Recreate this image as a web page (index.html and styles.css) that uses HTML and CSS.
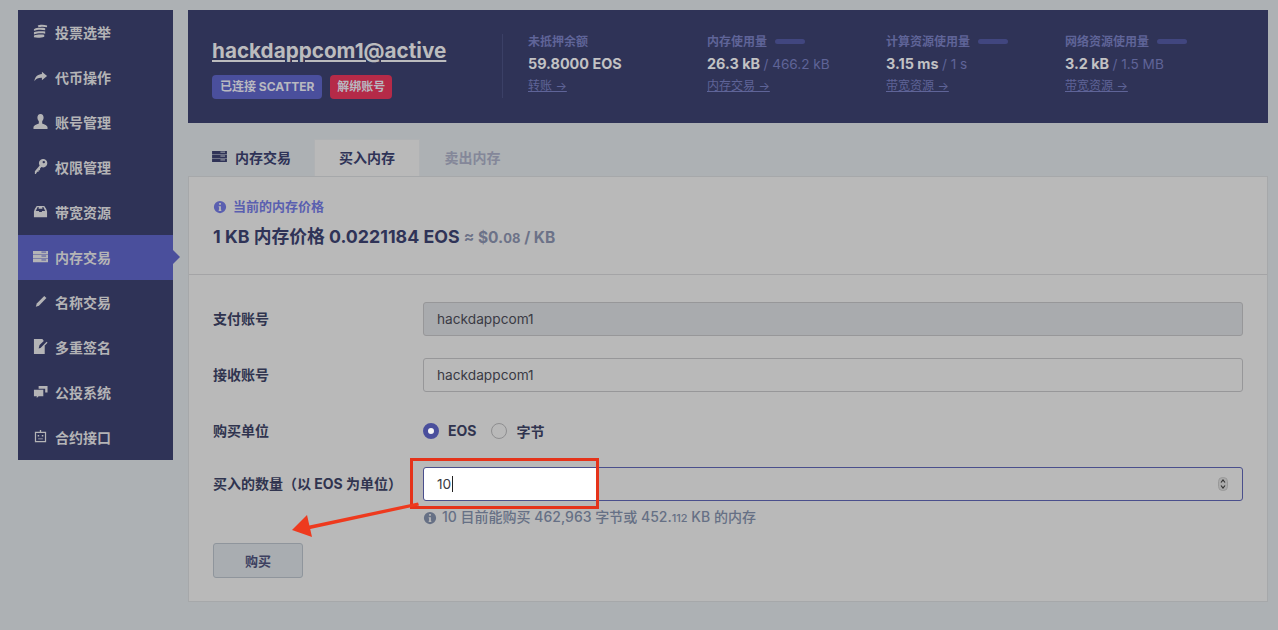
FILE: index.html
```html
<!DOCTYPE html>
<html lang="zh-CN">
  <head>
    <meta charset="UTF-8" />
    <meta name="viewport" content="width=device-width, initial-scale=1.0" />
    <title>内存交易</title>
    <link rel="stylesheet" href="styles.css">
  </head>
  <body>
    <div class="page">
      <ul class="sidebar">
        <li class="nav-item">
          <svg class="nav-icon" viewBox="0 0 16 16"><path d="M5 1.500C7 .5 12 .5 15 1.500v2c-3-1-7-.8-9 0zM1 5.500c2-1.500 8-2 12-1v2.200c-4-1-9-.6-12 .6zM1 8.700c3-1.200 8-1.400 12-.6v2.200c-4-.8-9-.4-12 .8zM1 12.300c3-1.200 8-1.400 11-.8v2c-3 1.200-8 1.400-11 .6z"/></svg>
          投票选举
        </li>
        <li class="nav-item">
          <svg class="nav-icon" viewBox="0 0 16 16"><path d="M9.500 3l5.500 4.500-5.500 4.500V9.400C6 9.200 3.500 10.200 1.500 13 2 8.500 5 5.800 9.500 5.400z"/></svg>
          代币操作
        </li>
        <li class="nav-item">
          <svg class="nav-icon" viewBox="0 0 16 16"><path d="M8 0c2.200 0 3.300 1.600 3.300 3.800 0 1.800-.8 3.300-1.500 4v2.200c1 .8 5 1.200 5.700 4v2H.5v-2c.7-2.800 4.700-3.200 5.700-4V7.800c-.7-.7-1.500-2.200-1.500-4C4.700 1.600 5.800 0 8 0z"/></svg>
          账号管理
        </li>
        <li class="nav-item">
          <svg class="nav-icon" viewBox="0 0 16 16"><path fill-rule="evenodd" d="M10.500 0a4.500 4.500 0 0 1 .5 9c-.8 0-1.500-.2-2-.5L7.500 10v2H6v1.500H4.500L3 16H2v-3l5.100-6A4.500 4.500 0 0 1 10.500 0zm1 2a1.300 1.300 0 1 0 0 2.600 1.300 1.300 0 0 0 0-2.600z"/></svg>
          权限管理
        </li>
        <li class="nav-item">
          <svg class="nav-icon" viewBox="0 0 16 16"><path fill-rule="evenodd" d="M4 2h8l2 3 1 3v6H1V8l1-3zm1 1.300L3 7.500h3.500v1h3v-1H13l-2-4.200h-1V5H6V3.300z"/></svg>
          带宽资源
        </li>
        <li class="nav-item active">
          <svg class="nav-icon" viewBox="0 0 16 14"><path d="M0 1h16v3.600H0zM0 5.200h16v3.600H0zM0 9.400h16V13H0z"/><path d="M9 2.300h5M9 6.500h5M9 10.700h5" stroke="#4a4f9c"/></svg>
          内存交易
        </li>
        <li class="nav-item">
          <svg class="nav-icon" viewBox="0 0 16 16"><path d="M12 2l2.300 2.300-8 8.200-3.300 1 1-3.300z"/></svg>
          名称交易
        </li>
        <li class="nav-item">
          <svg class="nav-icon" viewBox="0 0 16 16"><path d="M1 0h9l1.500 2-4.500 4.500-1 3.500 3.500-1 3-3v10H1zM15.500 4L9 10.500 8 9.500 14.500 3z"/></svg>
          多重签名
        </li>
        <li class="nav-item">
          <svg class="nav-icon" viewBox="0 0 16 16"><path d="M6 2h9.500v7H13V5H6zM1 6h10v7H6l-2 2v-2H1z"/></svg>
          公投系统
        </li>
        <li class="nav-item">
          <svg class="nav-icon" viewBox="0 0 16 16"><path fill-rule="evenodd" d="M7.300 1h1.400v2H14v11H2V3h5.300zM3.300 4.300v8.400h9.400V4.300zM5 6.500h1.600v1.600H5zm4.400 0H11v1.600H9.400zM5.500 10h5v1h-5z"/></svg>
          合约接口
        </li>
      </ul>

      <div class="content">
        <div class="account-bar">
          <div class="account">
            <a class="account-name">hackdappcom1@active</a>
            <div class="badges">
              <span class="badge badge-blue">已连接 SCATTER</span>
              <span class="badge badge-red">解绑账号</span>
            </div>
          </div>
          <div class="stats">
            <div class="stat">
              <div class="stat-label">未抵押余额</div>
              <div class="stat-value">59.8000 EOS</div>
              <a class="stat-link">转账 →</a>
            </div>
            <div class="stat">
              <div class="stat-label">内存使用量 <span class="meter"></span></div>
              <div class="stat-value">26.3 kB <span class="stat-total">/ 466.2 kB</span></div>
              <a class="stat-link">内存交易 →</a>
            </div>
            <div class="stat">
              <div class="stat-label">计算资源使用量 <span class="meter"></span></div>
              <div class="stat-value">3.15 ms <span class="stat-total">/ 1 s</span></div>
              <a class="stat-link">带宽资源 →</a>
            </div>
            <div class="stat">
              <div class="stat-label">网络资源使用量 <span class="meter"></span></div>
              <div class="stat-value">3.2 kB <span class="stat-total">/ 1.5 MB</span></div>
              <a class="stat-link">带宽资源 →</a>
            </div>
          </div>
        </div>

        <div class="tabs">
          <div class="tab tab-plain">
            <svg class="tab-icon" viewBox="0 0 16 14"><path d="M0 1h16v3.600H0zM0 5.200h16v3.600H0zM0 9.400h16V13H0z"/><path d="M9 2.300h5M9 6.500h5M9 10.700h5" stroke="#adb1b4"/></svg>
            内存交易
          </div>
          <div class="tab tab-active">买入内存</div>
          <div class="tab tab-muted">卖出内存</div>
        </div>

        <div class="card">
          <div class="price">
            <div class="price-title">
              <svg class="info-icon" viewBox="0 0 16 16"><path fill-rule="evenodd" d="M8 1a7 7 0 1 1 0 14A7 7 0 0 1 8 1zM7 3.500v2h2v-2zM6.500 7v1.200H7v3h-.5v1.300h3v-1.300H9V7z"/></svg>
              当前的内存价格
            </div>
            <div class="price-main">1 KB 内存价格 0.0221184 EOS <span class="price-usd">≈ $0.<small>08</small> / KB</span></div>
          </div>

          <form class="form">
            <div class="row">
              <label class="row-label">支付账号</label>
              <div class="field field-disabled">hackdappcom1</div>
            </div>
            <div class="row">
              <label class="row-label">接收账号</label>
              <div class="field">hackdappcom1</div>
            </div>
            <div class="row row-radio">
              <label class="row-label">购买单位</label>
              <div class="radios">
                <span class="radio radio-on"></span><span class="radio-text">EOS</span>
                <span class="radio"></span><span class="radio-text">字节</span>
              </div>
            </div>
            <div class="row row-amount">
              <label class="row-label">买入的数量（以 EOS 为单位）</label>
              <div class="field field-focus">
                <span class="typed">10</span>
                <svg class="spinner" viewBox="0 0 10 14"><rect x="0.500" y="0.500" width="9" height="13" rx="4" fill="#aaa" stroke="#999"/><path d="M3 5.500L5 3l2 2.500M3 8.500L5 11l2-2.500" fill="none" stroke="#333" stroke-width="1.200"/></svg>
              </div>
            </div>
            <div class="hint">
              <svg class="hint-icon" viewBox="0 0 16 16"><path fill-rule="evenodd" d="M8 1a7 7 0 1 1 0 14A7 7 0 0 1 8 1zM7 3.500v2h2v-2zM6.500 7v1.200H7v3h-.5v1.300h3v-1.300H9V7z"/></svg>
              <span>10 目前能购买 462,963 字节或 452.<small>112</small> KB 的内存</span>
            </div>
            <button class="buy" type="button">购买</button>
          </form>
        </div>
      </div>
    </div>

    <!-- annotation drawn over the screenshot -->
    <div class="mark-box"></div>
    <svg class="mark-arrow" width="130" height="42" viewBox="0 0 130 42">
      <path d="M127 3.500L16 27l1 3.500L128 6.500z" fill="#ee3a1e"/>
      <path d="M1 31L16 16l5 22z" fill="#ee3a1e"/>
    </svg>
  </body>
</html>
```

FILE: styles.css
```css
html, body {
  margin: 0;
  height: 100%;
  overflow: hidden;
}

body {
  position: relative;
  font-family: Inter, "Noto Sans CJK SC", sans-serif;
  background: #adb1b4;
  color: #2f3357;
}

.page {
  display: flex;
  align-items: flex-start;
  gap: 15px;
  padding: 10px 10px 0 18px;
}

/* sidebar */
.sidebar {
  width: 155px;
  flex: none;
  margin: 0;
  padding: 0;
  list-style: none;
  background: #2f3357;
}

.nav-item {
  position: relative;
  display: flex;
  align-items: center;
  gap: 7px;
  height: 45px;
  box-sizing: border-box;
  padding: 0 0 2px 15px;
  font-size: 14px;
  font-weight: 700;
  color: #b4b4b6;
}

.nav-item.active {
  background: #4a4f9c;
}

.nav-item.active::after {
  content: "";
  position: absolute;
  right: -7px;
  top: 15px;
  border-left: 7px solid #4a4f9c;
  border-top: 7px solid transparent;
  border-bottom: 7px solid transparent;
}

.nav-icon {
  width: 15px;
  height: 15px;
  fill: #b4b4b6;
  flex: none;
}

/* account bar */
.content {
  flex: 1;
  min-width: 0;
}

.account-bar {
  display: flex;
  height: 113px;
  box-sizing: border-box;
  padding: 24px 0 0 24px;
  background: #2f3357;
}

.account {
  width: 290px;
  height: 64px;
  flex: none;
  border-right: 1px solid #3b4066;
}

.account-name {
  display: block;
  margin-top: 3px;
  font-size: 20.700px;
  line-height: 27px;
  font-weight: 700;
  color: #bcbcbe;
  text-decoration: underline;
  text-underline-offset: 2px;
}

.badges {
  display: flex;
  gap: 8px;
  margin-top: 11px;
}

.badge {
  height: 24px;
  padding: 0 7px;
  border-radius: 4px;
  font-size: 12px;
  line-height: 24px;
  font-weight: 700;
  color: #b8b8c0;
}

.badge-blue {
  padding: 0 8px;
  background: #4a4f9c;
}

.badge-red {
  background: #b52a48;
}

.stats {
  display: flex;
  padding-left: 25px;
}

.stat {
  width: 179px;
}

.stat-label {
  display: flex;
  align-items: center;
  gap: 8px;
  height: 15px;
  font-size: 12px;
  line-height: 15px;
  font-weight: 700;
  color: #5f6498;
}

.meter {
  width: 30px;
  height: 5px;
  border-radius: 3px;
  background: #41467f;
}

.stat-value {
  margin-top: 5px;
  font-size: 14.400px;
  line-height: 20px;
  font-weight: 700;
  color: #c2c2c4;
}

.stat-total {
  font-weight: 400;
  font-size: 13.600px;
  color: #5f6498;
}

.stat-link {
  display: block;
  margin-top: 4px;
  font-size: 12px;
  line-height: 15px;
  color: #5f6498;
  text-decoration: underline;
}

/* tabs */
.tabs {
  display: flex;
  margin-top: 16px;
  height: 37px;
  padding-left: 1px;
}

.tab {
  display: flex;
  align-items: center;
  justify-content: center;
  gap: 8px;
  box-sizing: border-box;
  padding-bottom: 2px;
  font-size: 14px;
  font-weight: 700;
}

.tab-plain {
  width: 125px;
}

.tab-icon {
  width: 15px;
  height: 13px;
  fill: #2f3357;
}

.tab-active {
  width: 106px;
  background: #b9b9b9;
  border: 1px solid #b0b2b4;
  border-bottom: 0;
}

.tab-muted {
  width: 105px;
  color: #848799;
}

/* card */
.card {
  height: 426px;
  box-sizing: border-box;
  background: #b9b9b9;
  border: 1px solid #a6a8aa;
}

.price {
  height: 98px;
  box-sizing: border-box;
  padding: 21px 24px 0;
  border-bottom: 1px solid #a4a4a6;
}

.price-title {
  display: flex;
  align-items: center;
  gap: 6px;
  font-size: 13px;
  line-height: 17px;
  font-weight: 700;
  color: #5a5fb0;
}

.info-icon {
  width: 14px;
  height: 14px;
  fill: #5a5fb0;
}

.price-main {
  margin-top: 10px;
  font-size: 17.800px;
  line-height: 24px;
  font-weight: 700;
  color: #2f3357;
}

.price-usd {
  font-size: 15.500px;
  color: #6c7288;
}

.price-usd small {
  font-size: 13px;
}

.form {
  padding: 27px 24px 0;
}

.row {
  display: flex;
  align-items: center;
  margin-bottom: 22px;
}

.row-label {
  width: 210px;
  flex: none;
  font-size: 14px;
  line-height: 18px;
  font-weight: 700;
  color: #30344f;
  white-space: nowrap;
}

.field {
  flex: 1;
  height: 34px;
  box-sizing: border-box;
  padding-left: 13px;
  border: 1px solid #979799;
  border-radius: 3px;
  font-size: 13.700px;
  line-height: 32px;
  color: #3a3a44;
}

.field-disabled {
  background: #a9abae;
}

.row-radio {
  height: 31px;
  margin-bottom: 22px;
}

.row-radio .row-label, .radios {
  position: relative;
  top: 1px;
}

.radios {
  display: flex;
  align-items: center;
  font-size: 14px;
  font-weight: 700;
  color: #30344f;
}

.radio {
  width: 16px;
  height: 16px;
  box-sizing: border-box;
  border: 1px solid #8e8e90;
  border-radius: 50%;
}

.radio-on {
  border: 5px solid #4a4f9c;
  background: #f4f4f4;
}

.radio-text {
  margin: 0 15px 0 9px;
}

.row-amount {
  margin-bottom: 8px;
}

.field-focus {
  display: flex;
  align-items: center;
  justify-content: space-between;
  padding-right: 14px;
  border-color: #4a4f8c;
  background: linear-gradient(to right, #fff 174px, transparent 174px);
}

.typed {
  border-right: 1px solid #222;
  padding-right: 1px;
  line-height: 16px;
  color: #3a3a44;
}

.spinner {
  width: 10px;
  height: 14px;
}

.hint {
  display: flex;
  align-items: center;
  gap: 5px;
  margin-left: 210px;
  font-size: 14px;
  line-height: 16px;
  font-weight: 500;
  color: #667085;
}

.hint small {
  font-size: 11px;
}

.hint-icon {
  width: 14px;
  height: 14px;
  fill: #667085;
}

.buy {
  display: block;
  width: 90px;
  height: 35px;
  margin-top: 17px;
  padding: 0;
  border: 1px solid #8f959c;
  border-radius: 3px;
  background: #a9adb1;
  font-family: inherit;
  font-size: 13px;
  font-weight: 700;
  color: #3c4060;
}

/* annotation */
.mark-box {
  position: absolute;
  left: 410px;
  top: 458px;
  width: 189px;
  height: 51px;
  box-sizing: border-box;
  border: 3px solid #e5331a;
}

.mark-arrow {
  position: absolute;
  left: 291px;
  top: 499px;
}
```
